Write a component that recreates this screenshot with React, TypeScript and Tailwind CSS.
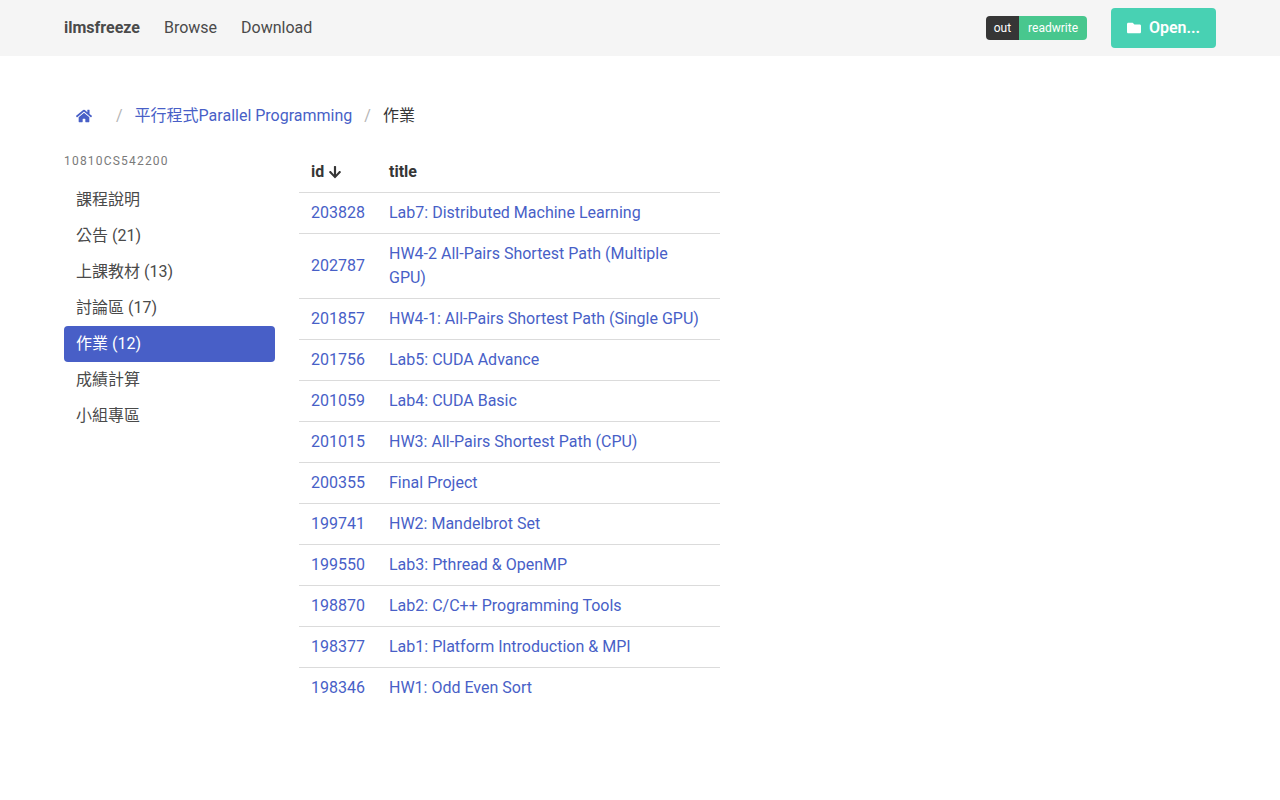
import { FaArrowDown, FaFolder, FaHome } from "react-icons/fa";

const menu = [
  { label: "課程說明" },
  { label: "公告 (21)" },
  { label: "上課教材 (13)" },
  { label: "討論區 (17)" },
  { label: "作業 (12)", active: true },
  { label: "成績計算" },
  { label: "小組專區" },
];

const rows = [
  ["203828", "Lab7: Distributed Machine Learning"],
  ["202787", "HW4-2 All-Pairs Shortest Path (Multiple GPU)"],
  ["201857", "HW4-1: All-Pairs Shortest Path (Single GPU)"],
  ["201756", "Lab5: CUDA Advance"],
  ["201059", "Lab4: CUDA Basic"],
  ["201015", "HW3: All-Pairs Shortest Path (CPU)"],
  ["200355", "Final Project"],
  ["199741", "HW2: Mandelbrot Set"],
  ["199550", "Lab3: Pthread & OpenMP"],
  ["198870", "Lab2: C/C++ Programming Tools"],
  ["198377", "Lab1: Platform Introduction & MPI"],
  ["198346", "HW1: Odd Even Sort"],
];

export default function App() {
  return (
    <div className="min-h-[800px] bg-white font-['Roboto','Noto_Sans_CJK_TC',sans-serif] text-base leading-6 text-[#4a4a4a]">
      <nav className="flex h-14 items-center bg-[#f5f5f5] px-16">
        <a className="font-bold">ilmsfreeze</a>
        <a className="ml-6">Browse</a>
        <a className="ml-6">Download</a>
        <div className="ml-auto flex items-center">
          <div className="flex h-6 text-xs leading-6">
            <span className="rounded-l bg-[#363636] px-2 text-white">out</span>
            <span className="rounded-r bg-[#48c78e] px-[9px] text-white">readwrite</span>
          </div>
          <button
            type="button"
            className="ml-6 flex h-10 w-[105px] items-center justify-center gap-2 rounded bg-[#48d1b3] font-semibold text-white"
          >
            <FaFolder className="size-[14px]" />
            Open...
          </button>
        </div>
      </nav>

      <main className="px-16 pt-12">
        <div className="flex h-6 items-center">
          <a className="flex w-10 justify-center pl-0 text-[#485fc7]">
            <FaHome className="size-4" />
          </a>
          <span className="ml-3 text-[#b5b5b5]">/</span>
          <a className="ml-3 text-[#485fc7]">平行程式Parallel Programming</a>
          <span className="ml-3 text-[#b5b5b5]">/</span>
          <span className="ml-3 text-[#363636]">作業</span>
        </div>

        <div className="mt-6 flex items-start">
          <aside className="w-[211px]">
            <p className="text-xs leading-[18px] tracking-[0.1em] text-[#7a7a7a]">10810CS542200</p>
            <ul className="mt-3">
              {menu.map((item) => (
                <li
                  key={item.label}
                  className={
                    item.active
                      ? "h-9 rounded bg-[#485fc7] px-3 py-[6px] text-white"
                      : "h-9 rounded px-3 py-[6px]"
                  }
                >
                  {item.label}
                </li>
              ))}
            </ul>
          </aside>

          <table className="ml-6 w-[421px] border-collapse text-left">
            <thead className="text-[#363636]">
              <tr className="border-b border-[#dbdbdb]">
                <th className="w-[78px] px-3 py-2 font-bold">
                  <span className="flex items-center gap-1">
                    id <FaArrowDown className="size-[14px]" />
                  </span>
                </th>
                <th className="px-3 py-2 font-bold">title</th>
              </tr>
            </thead>
            <tbody className="text-[#485fc7]">
              {rows.map(([id, title], i) => (
                <tr key={id} className={i < rows.length - 1 ? "border-b border-[#dbdbdb]" : ""}>
                  <td className="px-3 py-2">{id}</td>
                  <td className="px-3 py-2">{title}</td>
                </tr>
              ))}
            </tbody>
          </table>
        </div>
      </main>
    </div>
  );
}
